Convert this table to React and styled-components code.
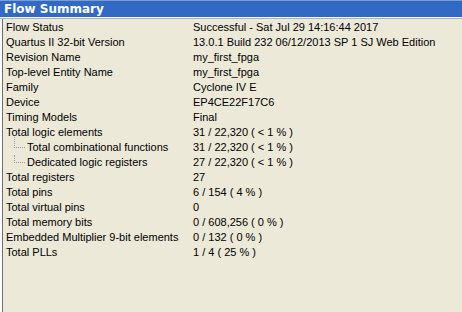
import React from 'react';
import styled, { createGlobalStyle } from 'styled-components';

const GlobalStyle = createGlobalStyle`
  html, body {
    margin: 0;
    padding: 0;
    background: #ece9d8;
  }
  body {
    font-family: Tahoma, Verdana, "DejaVu Sans", sans-serif;
  }
`;

const Panel = styled.div`
  width: 462px;
  height: 312px;
  display: flex;
  flex-direction: column;
  background: #ece9d8;
  overflow: hidden;
`;

const Header = styled.div`
  height: 16px;
  border-top: 1px solid #7f9dc9;
  background: #316ac5;
  color: #fff;
  font-family: "DejaVu Sans", Verdana, sans-serif;
  font-weight: bold;
  font-size: 12px;
  line-height: 16px;
  padding-left: 4px;
  border-bottom: 1px solid #f6f8fb;
`;

const Body = styled.div`
  flex: 1;
  display: flex;
  border-top: 1px solid #a5b3c8;
  padding-left: 2px;
  background: #fdfdfb;
`;

const Table = styled.div`
  flex: 1;
  border-left: 1px solid #6f6f6f;
  background: #ece9d8;
  padding-top: 1px;
`;

const Row = styled.div`
  display: grid;
  grid-template-columns: 190px 1fr;
  height: 15px;
  line-height: 15px;
  font-family: "Liberation Sans", Arial, sans-serif;
  font-size: 11px;
  color: #000;
`;

const Label = styled.div`
  position: relative;
  padding-left: ${p => (p.$child ? 24 : 3)}px;
  white-space: nowrap;
`;

const Value = styled.div`
  white-space: nowrap;
`;

const Branch = styled.span`
  position: absolute;
  left: 11px;
  top: ${p => (p.$first ? -3 : 0)}px;
  height: ${p => (p.$first ? 10 : 7)}px;
  width: 10px;
  border-left: 1px dotted #9a9a9a;
  border-bottom: 1px dotted #9a9a9a;
`;

const rows = [
  ['Flow Status', 'Successful - Sat Jul 29 14:16:44 2017'],
  ['Quartus II 32-bit Version', '13.0.1 Build 232 06/12/2013 SP 1 SJ Web Edition'],
  ['Revision Name', 'my_first_fpga'],
  ['Top-level Entity Name', 'my_first_fpga'],
  ['Family', 'Cyclone IV E'],
  ['Device', 'EP4CE22F17C6'],
  ['Timing Models', 'Final'],
  ['Total logic elements', '31 / 22,320 ( < 1 % )'],
  ['Total combinational functions', '31 / 22,320 ( < 1 % )', 'first'],
  ['Dedicated logic registers', '27 / 22,320 ( < 1 % )', 'child'],
  ['Total registers', '27'],
  ['Total pins', '6 / 154 ( 4 % )'],
  ['Total virtual pins', '0'],
  ['Total memory bits', '0 / 608,256 ( 0 % )'],
  ['Embedded Multiplier 9-bit elements', '0 / 132 ( 0 % )'],
  ['Total PLLs', '1 / 4 ( 25 % )'],
];

export default function App() {
  return (
    <Panel>
      <GlobalStyle />
      <Header>Flow Summary</Header>
      <Body>
        <Table>
          {rows.map(([label, value, kind]) => (
            <Row key={label}>
              <Label $child={!!kind}>
                {kind && <Branch $first={kind === 'first'} />}
                {label}
              </Label>
              <Value>{value}</Value>
            </Row>
          ))}
        </Table>
      </Body>
    </Panel>
  );
}
